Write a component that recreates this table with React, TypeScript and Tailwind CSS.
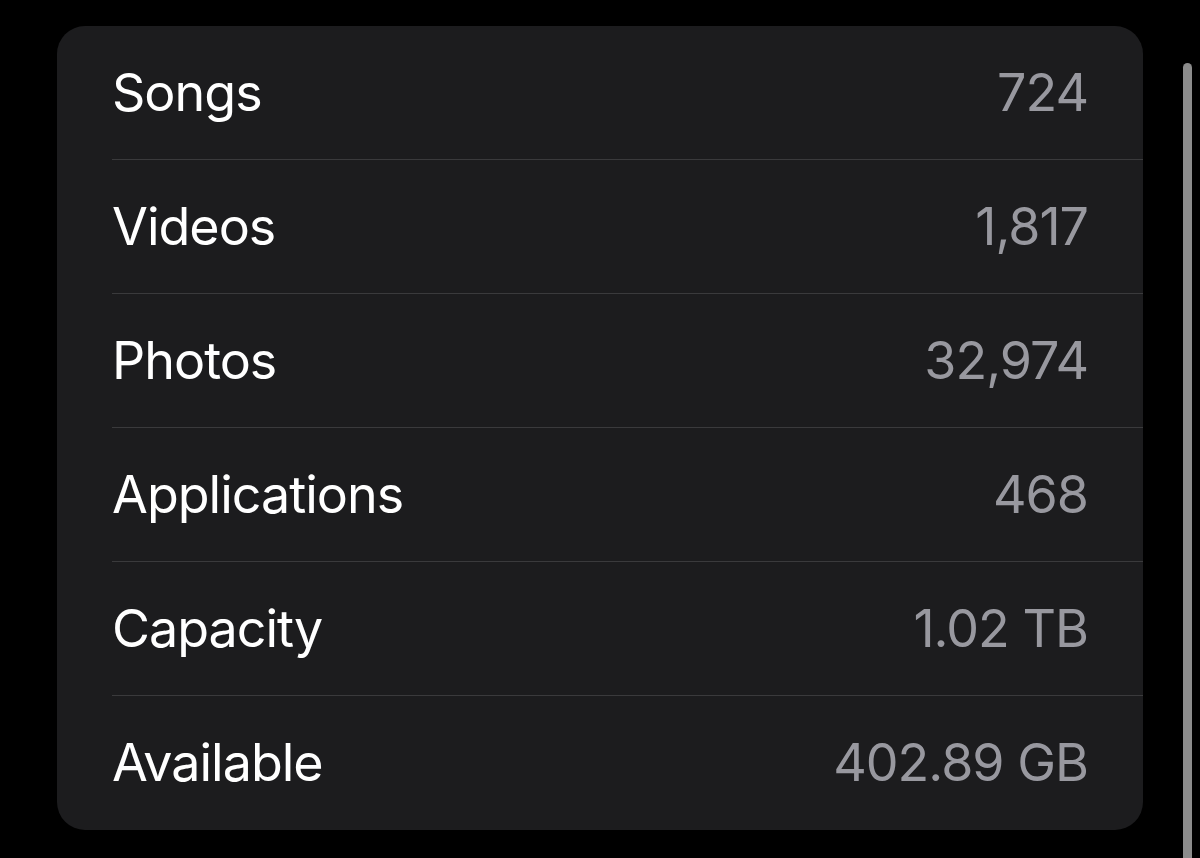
const rows = [
  { label: "Songs", value: "724" },
  { label: "Videos", value: "1,817" },
  { label: "Photos", value: "32,974" },
  { label: "Applications", value: "468" },
  { label: "Capacity", value: "1.02 TB" },
  { label: "Available", value: "402.89 GB" },
];

export default function App() {
  return (
    <div
      className="relative h-[858px] w-[1200px] overflow-hidden bg-black pl-[57px] pt-[26px]"
      style={{ fontFamily: "Inter, 'Liberation Sans', sans-serif" }}
    >
      <div className="w-[1086px] overflow-hidden rounded-[28px] bg-[#1c1c1e]">
        {rows.map((row, i) => (
          <div key={row.label} className="pl-[55px]">
            <div
              className={
                "flex h-[134px] items-center justify-between pr-[55px] text-[52px] tracking-[-1px] " +
                (i < rows.length - 1 ? "border-b border-[#3a3a3c]" : "")
              }
            >
              <span className="text-white">{row.label}</span>
              <span className="text-[#98989f]">{row.value}</span>
            </div>
          </div>
        ))}
      </div>

      {/* scroll indicator */}
      <div className="absolute left-[1183px] top-[63px] h-[820px] w-[9px] rounded-full bg-[#8c8c8c]" />
    </div>
  );
}
